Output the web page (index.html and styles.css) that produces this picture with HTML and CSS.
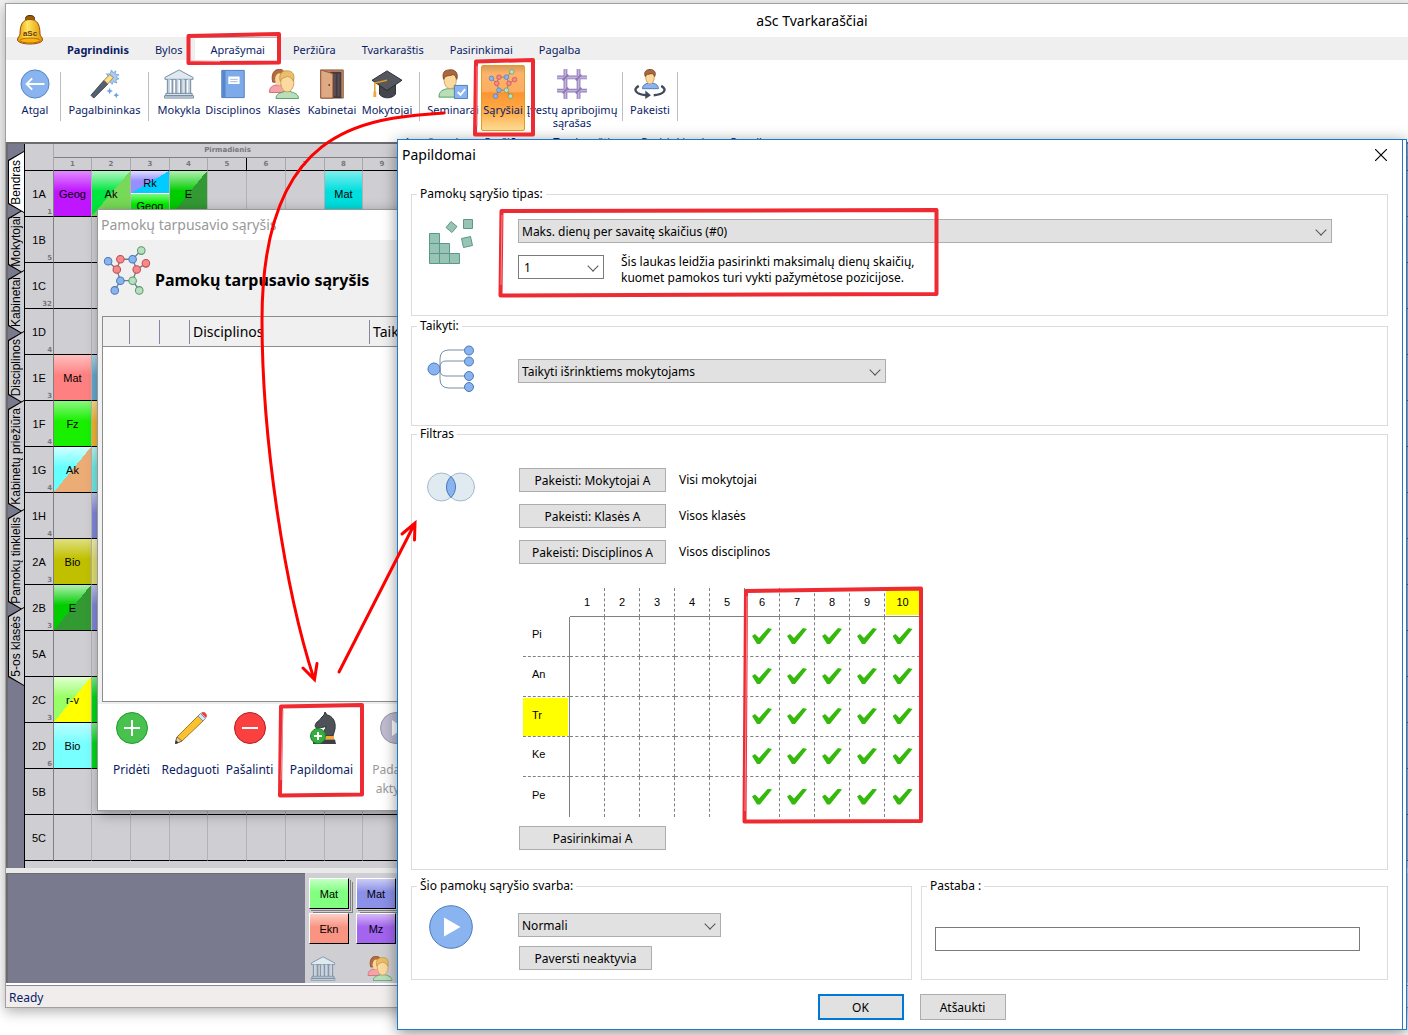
FILE: index.html
```html
<!DOCTYPE html>
<html lang="lt">
<head>
<meta charset="utf-8">
<title>aSc Tvarkaraščiai</title>
<link rel="stylesheet" href="styles.css">
</head>
<body>
<svg class="defs" aria-hidden="true">
  <symbol id="molecule" viewBox="0 0 47 48">
    <path d="M5 15l8.500 8L17 13h12l8.500-9M29 13l4 10 9-6M13.500 23L17 34h12l4-11M17 34l-5.500 9.500M29 34l6.500 9.500" fill="none" stroke="#6a7c92" stroke-width="1.300"/>
    <g fill="#8ab4f0" stroke="#4878b8"><circle cx="5" cy="15" r="3.700"/><circle cx="29" cy="13" r="3.700"/><circle cx="17" cy="34" r="3.700"/><circle cx="11.500" cy="43.500" r="3.700"/></g>
    <g fill="#f48a8a" stroke="#c44a4f"><circle cx="17" cy="13" r="3.700"/><circle cx="42" cy="17" r="3.700"/><circle cx="13.500" cy="23" r="3.700"/><circle cx="33" cy="23" r="3.700"/></g>
    <g fill="#b9dfc0" stroke="#569a68"><circle cx="37.500" cy="4.500" r="3.700"/><circle cx="29" cy="34" r="3.700"/><circle cx="35.500" cy="43.500" r="3.700"/></g>
  </symbol>
  <symbol id="school" viewBox="0 0 32 32">
    <path d="M1 9L16 1l15 8v2H1z" fill="#dfe9f0" stroke="#71889c"/>
    <path d="M4 11v15M9 11v15M13 11v15M18 11v15M23 11v15M28 11v15" stroke="#8298ad" stroke-width="2"/>
    <path d="M5.500 11v15M14.500 11v15M20 11v15M26.500 11v15" stroke="#c9d6e2" stroke-width="2"/>
    <path d="M2 26h28v2.500H2zM.500 28.500h31V31H.5z" fill="#d5e0e8" stroke="#71889c"/>
  </symbol>
  <symbol id="people" viewBox="0 0 32 32">
    <path d="M4 14C2 6 5 0 11 .500 17 0 18 6 17 14z" fill="#b76a3c" stroke="#8f4f2c"/>
    <path d="M.500 25c0-6 3-7 7-8h6l5 8z" fill="#f5a3a9" stroke="#d4666f"/>
    <ellipse cx="11" cy="11" rx="4.500" ry="6.500" fill="#fad59c"/>
    <path d="M7.500 31.500c0-5 4-6 9-7.500h6c5 1.500 9 3 9 7.500z" fill="#b9dfb9" stroke="#4f9d62"/>
    <ellipse cx="19.500" cy="14.500" rx="7" ry="10" fill="#fbd99f" stroke="#cfa05a"/>
    <path d="M12 13c-2-7 2-12 8-11 5 0 8 4 6 11-2-4-5-5-7-5-3 2-6 1-7 5z" fill="#e8bf68" stroke="#c79746"/>
  </symbol>
  <symbol id="person" viewBox="0 0 32 32">
    <path d="M1 30c0-7 5-8 9-9h6c5 1 9 3 9 9z" fill="#b9dfb9" stroke="#4f9d62"/>
    <ellipse cx="13" cy="12" rx="6.500" ry="9" fill="#fbd99f" stroke="#cfa05a"/>
    <path d="M6 11C4 4 7 1 12 1c6-1 10 3 8 10-1-3-2-5-4-5-5 2-8 0-10 5z" fill="#a9693c" stroke="#7f4a28"/>
  </symbol>
</svg>

<main class="desktop">
  <div class="app">
    <header class="app-head">
      <div class="app-title">aSc Tvarkaraščiai</div>
      <svg class="logo" viewBox="0 0 26 30" aria-hidden="true"><defs><linearGradient id="gold"><stop offset="0" stop-color="#e09a00"/><stop offset=".4" stop-color="#ffe562"/><stop offset="1" stop-color="#e09400"/></linearGradient></defs><ellipse cx="13" cy="3.500" rx="4.500" ry="3" fill="#9b5d06" stroke="#4d2d05"/><path d="M3 19C3 9 6 4.500 13 4.500S23 9 23 19c0 2 2.500 3 2.500 6 0 2-5 4-12.500 4S.500 27 .500 25c0-3 2.500-4 2.500-6z" fill="url(#gold)" stroke="#9c4a06"/><ellipse cx="13" cy="25.500" rx="10" ry="2.500" fill="#f7b20c" stroke="#b76a06"/><text x="13" y="21" class="logo-text">aSc</text></svg>
      <nav class="menu">
        <a class="menu-main" href="#">Pagrindinis</a><a href="#">Bylos</a><a class="menu-on" href="#">Aprašymai</a><a href="#">Peržiūra</a><a href="#">Tvarkaraštis</a><a href="#">Pasirinkimai</a><a href="#">Pagalba</a>
      </nav>
    </header>

    <div class="ribbon">
      <div class="tools">
        <button class="tool w50"><svg viewBox="0 0 32 32"><circle cx="16" cy="16" r="15" fill="#8ab4f0" stroke="#4f7fbf"/><path d="M26 16H7M13 10l-6 6 6 6" fill="none" stroke="#fff" stroke-width="2"/></svg>Atgal</button>
        <i class="sep"></i>
        <button class="tool w87"><svg viewBox="0 0 32 32"><path d="M23 1l1.500 3 3-2-.5 3.500 4 .500-3 2.500 3 2-3.500 1 1 3.500-3.500-1.500-1.500 3-2-3-3 1 1-3.500-3-1 3-2-2-3 3.500.500z" fill="#a9ccf5" stroke="#5e93d5" stroke-width=".7"/><path d="M1 28L15 12l4 4L4 31z" fill="#56606f" stroke="#39414e"/><path d="M15 12l6-6 4 3-6 7z" fill="#ffe08a" stroke="#a5874b"/><path d="M21 20l1 2.500 2.500 1-2.500 1-1 2.500-1-2.500-2.500-1 2.500-1zM28 25l1 2 2 1-2 1-1 2-1-2-2-1 2-1z" fill="#6ba3e6"/></svg>Pagalbininkas</button>
        <i class="sep"></i>
        <button class="tool w50 first"><svg viewBox="0 0 32 32"><use href="#school"/></svg>Mokykla</button>
        <button class="tool w58"><svg viewBox="0 0 32 32"><path d="M4 1.500h24v29H4z" fill="#7faaea" stroke="#4d7cbd"/><path d="M4.500 2H8v28H4.500z" fill="#5787cb"/><path d="M11 8h12v8H11z" fill="#fff"/><path d="M13 11h8M13 13.500h8" stroke="#9db9da"/></svg>Disciplinos</button>
        <button class="tool w44"><svg viewBox="0 0 32 32"><use href="#people"/></svg>Klasės</button>
        <button class="tool w52"><svg viewBox="0 0 32 32"><path d="M4 1h24v30H4z" fill="#c58a63" stroke="#8a553a"/><path d="M14 3h12v28H14z" fill="#453a40"/><path d="M18 5h2v24h-2zM22 5h2v24h-2z" fill="#5c5058"/><path d="M4 1l13 4v26H4z" fill="#dfa983" stroke="#93583a"/><circle cx="13" cy="17" r="1" fill="#6b3b27"/></svg>Kabinetai</button>
        <button class="tool w58"><svg viewBox="0 0 32 32"><path d="M8 14h17v13c-4 5-13 5-17 0z" fill="#43474d" stroke="#25282c"/><path d="M0 12L16 2l16 10-16 11z" fill="#55595f" stroke="#25282c"/><path d="M16 12L3 15v10" fill="none" stroke="#e79a22" stroke-width="1.500"/><path d="M1.500 24h3v6h-3z" fill="#f0a93a"/></svg>Mokytojai</button>
        <i class="sep gap"></i>
        <button class="tool w56 first"><svg viewBox="0 0 32 32"><use href="#person"/><path d="M17.500 17.500h14v14h-14z" fill="#8ab4f0" stroke="#4d7cbd"/><path d="M21 24.500l3 3 5-6" fill="none" stroke="#fff" stroke-width="2"/></svg>Seminarai</button>
        <button class="tool w44 tool-on"><svg viewBox="0 0 47 48"><use href="#molecule"/></svg>Sąryšiai</button>
        <button class="tool w94"><svg viewBox="0 0 32 32"><path d="M9 0v32M23 0v32M0 9h32M0 23h32" stroke="#8d78b3" stroke-width="4"/><path d="M9 0v32M23 0v32M0 9h32M0 23h32" stroke="#c3b3dd" stroke-width="2"/><path d="M6 12l6-6M20 12l6-6M6 26l6-6M20 26l6-6" stroke="#8d78b3" stroke-width="2"/></svg>Įvestų apribojimų sąrašas</button>
        <i class="sep gap"></i>
        <button class="tool w54"><svg viewBox="0 0 32 32"><path d="M8 21c0-4 3-5 6-6h5c4 1 6 3 6 6z" fill="#8ab4f0" stroke="#4878b8"/><ellipse cx="16" cy="9" rx="4.500" ry="7" fill="#fbd99f" stroke="#cfa05a"/><path d="M11 8C9 3 12 .500 16 .500S23 3 21 8c-1-3-2-3-4-3-3 1-5 0-6 3z" fill="#a9693c" stroke="#7f4a28"/><path d="M4 18c-7 4-3 9 8 10M28 18c7 4 3 9-8 10" fill="none" stroke="#414a58" stroke-width="2.500"/><path d="M11 23l6 5-6 4z" fill="#414a58"/></svg>Pakeisti</button>
        <i class="sep"></i>
      </div>
      <div class="menu-echo" aria-hidden="true"><span>Aprašymai</span><span>Peržiūra</span><span>Tvarkaraštis</span><span>Pasirinkimai</span><span>Pagalba</span></div>
    </div>

    <section class="work">
      <div class="side-tabs">
        <button class="side-tab t-on h62"><span>Bendras</span></button>
        <button class="side-tab h65"><span>Mokytojai</span></button>
        <button class="side-tab h65"><span>Kabinetai</span></button>
        <button class="side-tab h73"><span>Disciplinos</span></button>
        <button class="side-tab h113"><span>Kabinetų priežiūra</span></button>
        <button class="side-tab h102"><span>Pamokų tinklelis</span></button>
        <button class="side-tab h79"><span>5-os klasės</span></button>
      </div>
      <table class="plan">
        <colgroup><col class="c-head"><col class="c38"><col class="c39"><col class="c39"><col class="c38"><col class="c39"><col class="c39"><col class="c39"><col class="c38"><col class="c39"><col></colgroup>
        <thead>
          <tr class="r-day"><th></th><th colspan="9">Pirmadienis</th><th></th></tr>
          <tr class="r-hour"><th></th><th>1</th><th>2</th><th>3</th><th>4</th><th class="mid">5</th><th>6</th><th>7</th><th>8</th><th>9</th><th></th></tr>
        </thead>
        <tbody>
          <tr><th>1A<small>1</small></th><td><div class="les geog">Geog</div></td><td><div class="les split ak">Ak</div></td><td><div class="half"><div class="les split rk">Rk</div><div class="les geo2">Geog</div></div></td><td><div class="les split e">E</div></td><td></td><td></td><td></td><td><div class="les mat">Mat</div></td><td></td><td></td></tr>
          <tr><th>1B<small>5</small></th><td></td><td></td><td></td><td></td><td></td><td></td><td></td><td></td><td></td><td></td></tr>
          <tr><th>1C<small>32</small></th><td></td><td></td><td></td><td></td><td></td><td></td><td></td><td></td><td></td><td></td></tr>
          <tr><th>1D<small>4</small></th><td></td><td></td><td></td><td></td><td></td><td></td><td></td><td></td><td></td><td></td></tr>
          <tr><th>1E<small>3</small></th><td><div class="les mat2">Mat</div></td><td><div class="les blue"></div></td><td></td><td></td><td></td><td></td><td></td><td></td><td></td><td></td></tr>
          <tr><th>1F<small>4</small></th><td><div class="les fz">Fz</div></td><td><div class="les amber"></div></td><td></td><td></td><td></td><td></td><td></td><td></td><td></td><td></td></tr>
          <tr><th>1G<small>4</small></th><td><div class="les split ak2">Ak</div></td><td><div class="les aqua"></div></td><td></td><td></td><td></td><td></td><td></td><td></td><td></td><td></td></tr>
          <tr><th>1H<small>4</small></th><td></td><td><div class="les peri"></div></td><td></td><td></td><td></td><td></td><td></td><td></td><td></td><td></td></tr>
          <tr><th>2A<small>3</small></th><td><div class="les bio">Bio</div></td><td><div class="les straw"></div></td><td></td><td></td><td></td><td></td><td></td><td></td><td></td><td></td></tr>
          <tr><th>2B<small>3</small></th><td><div class="les split e">E</div></td><td><div class="les peri"></div></td><td></td><td></td><td></td><td></td><td></td><td></td><td></td><td></td></tr>
          <tr><th>5A</th><td></td><td></td><td></td><td></td><td></td><td></td><td></td><td></td><td></td><td></td></tr>
          <tr><th>2C<small>3</small></th><td><div class="les split rv">r-v</div></td><td><div class="les green"></div></td><td></td><td></td><td></td><td></td><td></td><td></td><td></td><td></td></tr>
          <tr><th>2D<small>6</small></th><td><div class="les bio2">Bio</div></td><td><div class="les green"></div></td><td></td><td></td><td></td><td></td><td></td><td></td><td></td><td></td></tr>
          <tr><th>5B</th><td></td><td></td><td></td><td></td><td></td><td></td><td></td><td></td><td></td><td></td></tr>
          <tr><th>5C</th><td></td><td></td><td></td><td></td><td></td><td></td><td></td><td></td><td></td><td></td></tr>
        </tbody>
      </table>
    </section>

    <section class="tray">
      <div class="cards">
        <div class="card pile c-green">Mat</div><div class="card pile c-blue">Mat</div>
        <div class="card c-coral">Ekn</div><div class="card c-violet">Mz</div>
        <svg class="tray-icon" viewBox="0 0 32 32"><use href="#school"/></svg>
        <svg class="tray-icon far" viewBox="0 0 32 32"><use href="#people"/></svg>
      </div>
    </section>
    <footer class="status">Ready</footer>
  </div>

  <section class="relations" aria-label="Pamokų tarpusavio sąryšis">
    <div class="rel-title">Pamokų tarpusavio sąryšis</div>
    <div class="rel-body">
      <h1 class="rel-head"><svg viewBox="0 0 47 48"><use href="#molecule"/></svg>Pamokų tarpusavio sąryšis</h1>
      <div class="list">
        <table class="list-head"><thead><tr><th class="n1"></th><th class="n2"></th><th class="n2"></th><th class="n3">Disciplinos</th><th>Taikyti</th></tr></thead></table>
      </div>
    </div>
    <div class="rel-tools">
      <button class="act w59"><svg viewBox="0 0 32 32"><circle cx="16" cy="16" r="15.500" fill="#48c14e" stroke="#1f9c28"/><path d="M16 8v16M8 16h16" stroke="#fff" stroke-width="2"/></svg>Pridėti</button>
      <button class="act w59"><svg viewBox="0 0 32 32"><path d="M0 32l2-7L23 4l5 5L7 29z" fill="#f8c231" stroke="#a67a22"/><path d="M0 32l2-7 5 4z" fill="#e8cda6" stroke="#7d6b56"/><path d="M0 32l1-3.500 2.500 2z" fill="#333"/><path d="M23 4l2.500-2.500 5 5L28 9z" fill="#d6e3f2" stroke="#7d8fa5"/><path d="M26 1c3-3 8 2 5 5z" fill="#e8423e"/></svg>Redaguoti</button>
      <button class="act w59"><svg viewBox="0 0 32 32"><circle cx="16" cy="16" r="15.500" fill="#fb4040" stroke="#b51d20"/><path d="M8 16h16" stroke="#fff" stroke-width="2"/></svg>Pašalinti</button>
      <button class="act w85"><svg viewBox="0 0 32 32"><path d="M19 0l2 3c6 1 9 7 8 14l-2 7H15c1-4 5-6 5-10-3 2-5 1-7 2l-2 1-2-3c1-5 5-5 6-8l3-3z" fill="#4d5158" stroke="#303338"/><path d="M16 24h12v3.500H16z" fill="#f6aa2c"/><path d="M7 27.500h22l1 4.500H7z" fill="#3c4046"/><circle cx="12" cy="24" r="7.500" fill="#35ae3d" stroke="#1b8a26"/><path d="M12 20v8M8 24h8" stroke="#fff" stroke-width="2"/></svg>Papildomai</button>
      <button class="act w59" disabled><svg viewBox="0 0 32 32"><circle cx="16" cy="16" r="15.500" fill="#bfbccf" stroke="#9995ad"/><path d="M12 8l12 8-12 8z" fill="#fff"/></svg>Padaryti aktyvia</button>
    </div>
  </section>

  <div class="dialog-frame">
    <form class="dialog">
      <div class="dlg-title"><span>Papildomai</span><button type="button" class="close" aria-label="Uždaryti"><svg viewBox="0 0 12 12"><path d="M0 0l12 12M12 0L0 12" stroke="#000" stroke-width="1.200"/></svg></button></div>
      <fieldset class="g-type"><legend>Pamokų sąryšio tipas:</legend>
        <div class="group">
          <svg class="g-icon" viewBox="0 0 48 48"><g fill="#98c4b6" stroke="#5c988a"><path d="M2.500 14.500h10v10h-10zM2.500 24.500h10v10h-10zM12.500 24.500h10v10h-10zM2.500 34.500h10v10h-10zM12.500 34.500h10v10h-10zM22.500 34.500h10v10h-10zM36.500.500h9v9h-9zM24 2.500l6 5-5 6-6-5zM34.500 19.500l9-2 2 9-9 2z"/></g></svg>
          <div class="g-body">
            <span class="pick"><select aria-label="Pamokų sąryšio tipas"><option>Maks. dienų per savaitę skaičius (#0)</option></select></span>
            <div class="count"><span class="pick pick-white"><select id="days"><option>1</option></select></span><label for="days">Šis laukas leidžia pasirinkti maksimalų dienų skaičių,<br>kuomet pamokos turi vykti pažymėtose pozicijose.</label></div>
          </div>
        </div>
      </fieldset>
      <fieldset class="g-apply"><legend>Taikyti:</legend>
        <div class="group">
          <svg class="g-icon" viewBox="0 0 48 48"><path d="M42 5H22q-9 0-9 9v20q0 9 9 9h20M42 16H19q-6 0-6 6v3q0 6 6 6h23" fill="none" stroke="#7690a8"/><g fill="#8ab4f0" stroke="#4878b8"><circle cx="7" cy="24" r="6"/><circle cx="42" cy="5.500" r="4.500"/><circle cx="42" cy="16.500" r="4.500"/><circle cx="42" cy="31" r="4.500"/><circle cx="42" cy="42" r="4.500"/></g></svg>
          <div class="g-body"><span class="pick pick-mid"><select aria-label="Taikyti"><option>Taikyti išrinktiems mokytojams</option></select></span></div>
        </div>
      </fieldset>
      <fieldset class="g-filter"><legend>Filtras</legend>
        <div class="group">
          <svg class="g-icon" viewBox="0 0 48 48"><circle cx="14.500" cy="15" r="14" fill="#dfeaf1" stroke="#a6b9cc"/><circle cx="33.500" cy="15" r="14" fill="#dfeaf1" stroke="#a6b9cc"/><path d="M24 4.500c6 6 6 15 0 21-6-6-6-15 0-21z" fill="#8ab4f0" stroke="#4878b8"/></svg>
          <div class="g-body">
            <div class="line"><button type="button" class="btn">Pakeisti: Mokytojai A</button>Visi mokytojai</div>
            <div class="line"><button type="button" class="btn">Pakeisti: Klasės A</button>Visos klasės</div>
            <div class="line"><button type="button" class="btn">Pakeisti: Disciplinos A</button>Visos disciplinos</div>
            <table class="marks">
              <thead><tr><td></td><th>1</th><th>2</th><th>3</th><th>4</th><th>5</th><th>6</th><th>7</th><th>8</th><th>9</th><th><span class="hot">10</span></th></tr></thead>
              <tbody>
                <tr><th>Pi</th><td><input type="checkbox" aria-label="Pi 1"></td><td><input type="checkbox" aria-label="Pi 2"></td><td><input type="checkbox" aria-label="Pi 3"></td><td><input type="checkbox" aria-label="Pi 4"></td><td><input type="checkbox" aria-label="Pi 5"></td><td><input type="checkbox" aria-label="Pi 6" checked></td><td><input type="checkbox" aria-label="Pi 7" checked></td><td><input type="checkbox" aria-label="Pi 8" checked></td><td><input type="checkbox" aria-label="Pi 9" checked></td><td><input type="checkbox" aria-label="Pi 10" checked></td></tr>
                <tr><th>An</th><td><input type="checkbox" aria-label="An 1"></td><td><input type="checkbox" aria-label="An 2"></td><td><input type="checkbox" aria-label="An 3"></td><td><input type="checkbox" aria-label="An 4"></td><td><input type="checkbox" aria-label="An 5"></td><td><input type="checkbox" aria-label="An 6" checked></td><td><input type="checkbox" aria-label="An 7" checked></td><td><input type="checkbox" aria-label="An 8" checked></td><td><input type="checkbox" aria-label="An 9" checked></td><td><input type="checkbox" aria-label="An 10" checked></td></tr>
                <tr><th><span class="hot">Tr</span></th><td><input type="checkbox" aria-label="Tr 1"></td><td><input type="checkbox" aria-label="Tr 2"></td><td><input type="checkbox" aria-label="Tr 3"></td><td><input type="checkbox" aria-label="Tr 4"></td><td><input type="checkbox" aria-label="Tr 5"></td><td><input type="checkbox" aria-label="Tr 6" checked></td><td><input type="checkbox" aria-label="Tr 7" checked></td><td><input type="checkbox" aria-label="Tr 8" checked></td><td><input type="checkbox" aria-label="Tr 9" checked></td><td><input type="checkbox" aria-label="Tr 10" checked></td></tr>
                <tr><th>Ke</th><td><input type="checkbox" aria-label="Ke 1"></td><td><input type="checkbox" aria-label="Ke 2"></td><td><input type="checkbox" aria-label="Ke 3"></td><td><input type="checkbox" aria-label="Ke 4"></td><td><input type="checkbox" aria-label="Ke 5"></td><td><input type="checkbox" aria-label="Ke 6" checked></td><td><input type="checkbox" aria-label="Ke 7" checked></td><td><input type="checkbox" aria-label="Ke 8" checked></td><td><input type="checkbox" aria-label="Ke 9" checked></td><td><input type="checkbox" aria-label="Ke 10" checked></td></tr>
                <tr><th>Pe</th><td><input type="checkbox" aria-label="Pe 1"></td><td><input type="checkbox" aria-label="Pe 2"></td><td><input type="checkbox" aria-label="Pe 3"></td><td><input type="checkbox" aria-label="Pe 4"></td><td><input type="checkbox" aria-label="Pe 5"></td><td><input type="checkbox" aria-label="Pe 6" checked></td><td><input type="checkbox" aria-label="Pe 7" checked></td><td><input type="checkbox" aria-label="Pe 8" checked></td><td><input type="checkbox" aria-label="Pe 9" checked></td><td><input type="checkbox" aria-label="Pe 10" checked></td></tr>
              </tbody>
            </table>
            <button type="button" class="btn">Pasirinkimai A</button>
          </div>
        </div>
      </fieldset>
      <div class="pair">
        <fieldset class="g-weight"><legend>Šio pamokų sąryšio svarba:</legend>
          <div class="group">
            <svg class="g-icon" viewBox="0 0 48 48"><circle cx="24" cy="22" r="21.300" fill="#8ab4f0" stroke="#4d7cbd"/><path d="M17 12.500L33.500 22 17 31.500z" fill="#fff"/></svg>
            <div class="g-body"><span class="pick pick-small"><select aria-label="Šio pamokų sąryšio svarba"><option>Normali</option></select></span><button type="button" class="btn btn-narrow">Paversti neaktyvia</button></div>
          </div>
        </fieldset>
        <fieldset class="g-note"><legend>Pastaba :</legend><div class="note"><input type="text" aria-label="Pastaba"></div></fieldset>
      </div>
      <div class="answers"><button type="button" class="ans ans-ok">OK</button><button type="button" class="ans">Atšaukti</button></div>
    </form>
  </div>

  <svg class="ink" aria-hidden="true">
    <g fill="none" stroke="#ee2a33" stroke-width="4" stroke-linejoin="round">
      <path d="M188.500 36l90.500-2v28.500l-90.500.500z"/>
      <path d="M476 61.500l57-1.500v74.500H475z"/>
      <path d="M501.500 211l435-1v84l-436 1.500z"/>
      <path d="M281 706.500l81-1.500v89.500l-82 1z"/>
      <path d="M746 591l175-2.500V821l-176.500.500z"/>
    </g>
    <g fill="none" stroke="#f48a90" stroke-width="1">
      <path d="M190 61l30 .5M477 66v60M502 215l-1 70M283 710l-2 70M747 596l-2 215"/>
    </g>
    <g fill="none" stroke="#fd0000" stroke-width="3" stroke-linecap="round">
      <path d="M444 113C360 118 262 130 262 320c0 120 23 270 52 359M303 668l11.500 11.500 2.500-16"/>
      <path d="M339 672l76-149M402 534l13-11-.5 17"/>
    </g>
  </svg>
</main>
</body>
</html>
```
FILE: styles.css
```css
* { box-sizing: border-box; }
body { margin: 0; background: #fff; color: #000; font: 12px/16px "Noto Sans", "Open Sans", sans-serif; }
button, select, input { font: inherit; color: inherit; margin: 0; }
button { padding: 0; border: 0; background: none; }
.defs { position: absolute; width: 0; height: 0; }
.desktop { position: relative; min-height: 100vh; overflow: hidden; padding: 3px 0 27px 5px; background: linear-gradient(#f1f1f1, #f4f4f4 60%, #fff 1000px); }

/* main window */
.app { border: 1px solid #a0a0a0; border-right: 0; background: #fff; box-shadow: 0 4px 12px rgba(0, 0, 0, .3); }
.app-head { position: relative; }
.app-title { height: 33px; padding-left: 210px; text-align: center; font-size: 14px; line-height: 34px; }
.logo { position: absolute; left: 10px; top: 11px; width: 28px; height: 30px; }
.logo-text { font: bold 8px "Liberation Sans", sans-serif; text-anchor: middle; fill: #6b3905; }
.menu { display: flex; height: 23px; padding-left: 48px; background: #efefef; font-size: 11px; line-height: 26px; }
.menu a { padding: 0 13px; color: #0a1c66; text-decoration: none; }
.menu .menu-main { font-weight: bold; }
.menu .menu-on { padding: 0 15px; background: #fff; border-top: 1px solid #b8b8b8; line-height: 24px; }
.ribbon { height: 82px; overflow: hidden; color: #0a1c66; }
.tools { display: flex; height: 74px; padding: 5px 0 0 4px; }
.tool { display: flex; flex-direction: column; align-items: center; height: 66px; padding-top: 4px; flex: none; font-size: 11px; line-height: 13px; white-space: nowrap; }
.tool svg { width: 32px; height: 30px; margin-bottom: 4px; flex: none; }
.w44 { width: 44px; } .w50 { width: 50px; } .w52 { width: 52px; } .w54 { width: 54px; } .w56 { width: 56px; }
.w58 { width: 58px; } .w59 { width: 59px; } .w85 { width: 85px; } .w87 { width: 87px; }
.w94 { width: 94px; }
.tool.w94 { white-space: normal; }
.tool.first { margin-left: 5px; }
.tool-on { background: linear-gradient(#d99a5a, #fcb36b 12%, #fcae60 40%, #fc9430 42%, #fdb04e 75%, #fedd97); border: 1px solid #e59b1d; padding-top: 3px; border-radius: 2px; }
.sep { width: 1px; height: 49px; margin-top: 7px; background: #bdbdbd; }
.sep.gap { margin-left: 3px; }
.menu-echo { display: flex; gap: 26px; padding-left: 398px; font-size: 11px; line-height: 16px; }

/* timetable */
.work { display: flex; height: 726px; border: 2px solid #6b6b70; border-width: 2px 0 0 2px; background: #cfced3; }
.side-tabs { display: flex; flex-direction: column; width: 17px; padding-top: 7px; background: #7a7a8f; border-right: 1px solid #000; }
.side-tab { position: relative; flex: none; width: 16px; margin-bottom: -4px; background: #000; clip-path: polygon(100% 0, 100% 100%, 0 calc(100% - 9px), 0 9px); }
.side-tab::before { content: ""; position: absolute; inset: 0; background: #cfced3; clip-path: polygon(100% 1px, 100% calc(100% - 1px), 1px calc(100% - 10px), 1px 10px); }
.side-tab.t-on { z-index: 1; }
.side-tab.t-on::before { background: #fff; }
.side-tab span { position: relative; display: block; writing-mode: vertical-rl; transform: rotate(180deg); margin: 0 auto; font: 12px/16px "Liberation Sans", Arial, sans-serif; }
.h62 { height: 62px; } .h65 { height: 65px; } .h73 { height: 73px; }
.h113 { height: 113px; } .h102 { height: 102px; } .h79 { height: 79px; }
.plan { flex: 1; height: 717px; table-layout: fixed; border-spacing: 0; font: 11px/13px "Liberation Sans", Arial, sans-serif; }
.c-head { width: 29px; } .c38 { width: 38px; } .c39 { width: 39px; }
.plan th, .plan td { padding: 0; font-weight: normal; }
.plan thead th { border-right: 1px solid #a9a9ad; font-family: "DejaVu Sans", sans-serif; font-weight: bold; font-size: 7px; line-height: 11px; color: #77777b; }
.r-day th { height: 14px; border-bottom: 1px solid #808083; }
.r-day th:first-child { border-bottom: 0; }
.r-hour th { height: 13px; border-bottom: 1px solid #000; }
.plan .mid { border-right-color: #000; }
.plan tbody th { position: relative; height: 46px; padding-top: 2px; border-right: 1px solid #808083; border-bottom: 1px solid #000; }
.plan tbody td { height: 46px; border-right: 1px solid #b3b3b7; border-bottom: 1px solid #000; }
.plan small { position: absolute; right: 1px; bottom: 0; font: bold 7px/8px "DejaVu Sans", sans-serif; color: #77777b; }
.les { --a: #ccc; display: flex; align-items: center; justify-content: center; height: 45px; padding-top: 2px; background: linear-gradient(rgba(255, 255, 255, .5), rgba(255, 255, 255, 0) 45%), var(--a); }
.les.split { background: linear-gradient(to bottom right, transparent 50%, var(--b) 50%), linear-gradient(rgba(255, 255, 255, .7), rgba(255, 255, 255, 0) 45%), var(--a); }
.half { height: 45px; overflow: hidden; }
.half .les { height: 23px; border-bottom: 1px solid #fff; }
.geog { --a: #c016ff; } .ak { --a: #00e63e; --b: #77d957; } .rk { --a: #9590ff; --b: #00ccff; }
.geo2 { --a: #00f000; } .e { --a: #00cc00; --b: #339933; } .mat { --a: #00dede; }
.mat2 { --a: #ff8080; } .fz { --a: #18f000; } .ak2 { --a: #66ffff; --b: #ecac76; }
.bio { --a: #c0c000; } .rv { --a: #99ff66; --b: #ffff00; } .bio2 { --a: #78ffff; }
.blue { --a: #64a8cc; } .amber { --a: #f2b430; } .aqua { --a: #70e8e4; } .peri { --a: #8087d8; }
.straw { --a: #e0de74; } .green { --a: #00d81a; }

/* unplaced cards */
.tray { display: flex; height: 117px; padding-left: 299px; border-top: 5px solid #e9e9e9; background: #7a7a8f; box-shadow: inset 0 1px #6b6b70, inset 2px 0 #6b6b70; border-bottom: 2px solid #fff; }
.cards { display: grid; grid-template-columns: 40px 40px; gap: 4px 7px; align-content: start; flex: 1; padding: 5px 0 0 4px; background: #cfced3; }
.card { height: 31px; border: 1px solid #fff; border-color: #fff #000 #000 #fff; text-align: center; font: 11px/31px "Liberation Sans", Arial, sans-serif; background: linear-gradient(rgba(255, 255, 255, .55), rgba(255, 255, 255, 0) 45%), var(--a); }
.pile { box-shadow: 1px 1px #cfced3, 2px 2px #808080, 3px 3px #cfced3, 4px 4px #808080; }
.c-green { --a: #80ff80; } .c-blue { --a: #8b90e8; } .c-coral { --a: #fa9482; } .c-violet { --a: #a364ee; }
.tray-icon { width: 26px; height: 25px; margin: 8px 0 0 1px; }
.tray-icon.far { margin-left: 11px; }
.status { height: 22px; padding-left: 3px; border-top: 1px solid #8688a0; background: #f0edec; color: #0a1c66; line-height: 23px; }

/* relations window */
.relations { position: absolute; left: 97px; top: 209px; width: 430px; border: 1px solid #999; background: #fff; box-shadow: 2px 3px 12px rgba(0, 0, 0, .35); }
.rel-title { height: 30px; padding-left: 3px; font-size: 14px; line-height: 29px; color: #999; }
.rel-body { padding: 6px 0 0 4px; background: #f0f0f0; }
.rel-head { display: flex; align-items: flex-start; gap: 4px; height: 70px; margin: 0; padding-left: 1px; font-size: 16px; line-height: 68px; }
.rel-head svg { width: 48px; height: 49px; }
.list { height: 386px; border: 1px solid #8c8c8c; background: #fff; }
.list-head { width: 100%; height: 30px; table-layout: fixed; border-spacing: 0; background: #f0f0f0; border-bottom: 1px solid #8c8c8c; font-size: 14px; }
.list-head th { padding: 0 3px; background: linear-gradient(#8785a0, #8785a0) right center / 1px 24px no-repeat; text-align: left; font-weight: normal; line-height: 24px; }
.n1 { width: 27px; } .n2 { width: 30px; } .n3 { width: 180px; }
.rel-tools { display: flex; height: 108px; padding: 8px 0 0 4px; border-top: 2px solid #eee; color: #0a1c66; }
.act { display: flex; flex-direction: column; align-items: center; flex: none; color: #0a1c66; line-height: 19px; }
.act svg { width: 32px; height: 32px; margin-bottom: 16px; }
.act:disabled { margin-left: 2px; color: #9a9a9a; }

/* options dialog */
.dialog-frame { position: absolute; left: 397px; top: 139px; right: 1px; padding-right: 3px; border: 1px solid #1a7bd0; background: #fff; box-shadow: 0 3px 14px rgba(0, 0, 0, .45); }
.dialog { padding: 0 14px 9px 13px; border-right: 1px solid #1a7bd0; }
.dlg-title { display: flex; justify-content: space-between; margin: 0 0 17px -9px; font-size: 14px; line-height: 30px; height: 30px; }
.close { width: 12px; margin-right: 1px; }
.close svg { display: block; width: 12px; height: 12px; }
fieldset { min-width: 0; margin: 0; padding: 0; border: 1px solid #dcdcdc; }
legend { height: 14px; margin-left: 5px; padding: 0 3px; line-height: 14px; }
.group { display: grid; grid-template-columns: 48px 1fr; column-gap: 43px; align-items: start; padding-left: 15px; }
.g-icon { width: 48px; height: 48px; }
.g-body { display: flex; flex-direction: column; align-items: flex-start; }
.g-type { height: 129px; margin-bottom: 3px; }
.g-type .group { padding-top: 18px; }
.g-type .g-body { gap: 11px; padding-right: 55px; }
.g-apply { height: 107px; margin-bottom: 1px; }
.g-apply .group { padding-top: 12px; }
.g-apply .g-body { padding-top: 14px; }
.g-filter { height: 443px; margin-bottom: 9px; }
.g-filter .group { padding-top: 27px; }
.g-filter .g-body { gap: 12px; }
.g-filter .g-icon { margin-top: 4px; }
.g-weight .group { padding-top: 12px; }
.g-weight .g-body { gap: 9px; padding-top: 8px; }
.pick { position: relative; display: block; width: 100%; }
.pick-mid { width: 368px; } .pick-small { width: 203px; } .pick-white { width: 86px; }
.pick select { display: block; width: 100%; height: 24px; padding: 1px 24px 0 3px; border: 1px solid #adadad; border-radius: 0; background: #e1e1e1; appearance: none; }
.pick-white select { background: #fff; border-color: #7a7a7a; padding-left: 5px; }
.pick::after { content: ""; position: absolute; right: 7px; top: 7px; width: 7px; height: 7px; border: solid #555; border-width: 0 1px 1px 0; transform: rotate(45deg); pointer-events: none; }
.count { display: flex; gap: 17px; align-items: flex-start; }
.count .pick { margin-top: 1px; }
.btn { width: 147px; height: 24px; margin-left: 1px; padding-top: 1px; border: 1px solid #adadad; background: #e1e1e1; }
.btn-narrow { width: 133px; }
.line { display: flex; align-items: center; gap: 13px; }
.marks { width: 397px; margin: 12px 0 -3px 5px; table-layout: fixed; border-spacing: 0; font: 11px/13px "Liberation Sans", Arial, sans-serif; }
.marks th, .marks td { width: 35px; height: 40px; padding: 0; border: 0 dashed #808080; border-width: 0 1px 1px 0; font-weight: normal; }
.marks thead th, .marks thead td { height: 29px; border-bottom: 1px solid #808080; }
.marks thead td:first-child { width: 47px; border: 0; }
.marks tr > :last-child { border-right: 0; }
.marks tbody th { border-right: 1px solid #808080; text-align: left; padding: 0 0 4px 9px; }
.marks tbody tr:last-child > * { border-bottom: 0; }
.marks .hot { display: block; margin: 0 1px; line-height: 26px; background: #ff0; }
.marks tbody .hot { margin: 0 1px -4px -9px; padding: 0 0 4px 9px; line-height: 34px; }
.marks input { display: block; width: 20px; height: 17px; margin: 0 auto; appearance: none; }
.marks input:checked { background: #35b90c; clip-path: polygon(0 8px, 3px 6px, 7px 10px, 16px 0, 20px 1px, 8px 16px, 5px 16px); }
.pair { display: grid; grid-template-columns: 501fr 467fr; column-gap: 9px; }
.pair fieldset { height: 101px; }
.note { padding: 34px 27px 0 13px; }
.note input { display: block; width: 100%; height: 24px; border: 1px solid #7a7a7a; background: #fff; }
.answers { display: flex; justify-content: center; gap: 16px; padding: 14px 0 0 24px; }
.ans { width: 86px; height: 26px; padding-top: 1px; border: 1px solid #adadad; background: #e1e1e1; }
.ans-ok { border: 2px solid #0078d7; }

.ink { position: absolute; left: 0; top: 0; width: 100%; height: 100%; pointer-events: none; }
```
